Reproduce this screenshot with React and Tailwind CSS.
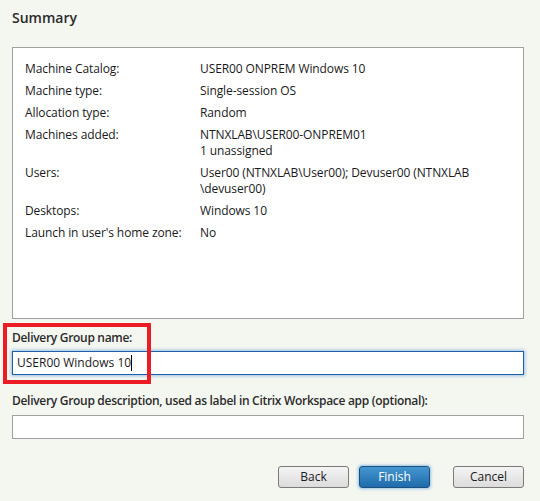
import React from 'react';

const rows = [
  { label: 'Machine Catalog:', value: ['USER00 ONPREM Windows 10'] },
  { label: 'Machine type:', value: ['Single-session OS'] },
  { label: 'Allocation type:', value: ['Random'] },
  { label: 'Machines added:', value: ['NTNXLAB\\USER00-ONPREM01', '1 unassigned'] },
  { label: 'Users:', value: ['User00 (NTNXLAB\\User00); Devuser00 (NTNXLAB', '\\devuser00)'] },
  { label: 'Desktops:', value: ['Windows 10'] },
  { label: "Launch in user's home zone:", value: ['No'] },
];

const font = { fontFamily: '"Open Sans", "Noto Sans", "Liberation Sans", sans-serif' };

const App = () => (
  <div className="relative w-[540px] h-[501px] bg-[#f4f6f0] text-[#1a1a1a] overflow-hidden" style={font}>
    <div className="pl-3 pr-4 pt-[9px]">
      <h2 className="text-[14px] leading-[18px] font-semibold text-[#2b2b2b]">Summary</h2>

      <div className="mt-5 w-[512px] h-[272px] bg-white border border-[#a0a0a0] pt-[13px] pl-3 flex flex-col gap-[6px]">
        {rows.map(r => (
          <div key={r.label} className="flex text-[12px] leading-4 tracking-[-0.1px]">
            <div className="w-[175px] shrink-0">{r.label}</div>
            <div>
              {r.value.map(v => (
                <div key={v}>{v}</div>
              ))}
            </div>
          </div>
        ))}
      </div>

      <div className="mt-[11px] text-[12px] leading-4 font-semibold tracking-[-0.3px] text-[#2b2b2b]">Delivery Group name:</div>
      <div className="mt-[5px] w-[512px] h-6 bg-white border border-[#1f5fa6] shadow-[0_0_3px_1px_rgba(80,150,220,0.55)] flex items-center pl-1 text-[12px]">
        <span>USER00 Windows 10</span>
        <span className="w-px h-4 bg-black"></span>
      </div>

      <div className="mt-[18px] text-[12px] leading-4 font-semibold tracking-[-0.3px] text-[#2b2b2b]">
        Delivery Group description, used as label in Citrix Workspace app (optional):
      </div>
      <div className="mt-[6px] w-[512px] h-6 bg-white border border-[#a0a0a0]"></div>

      <div className="mt-[27px] flex justify-end w-[512px] text-[12px]">
        <button className="w-[71px] h-[22px] rounded-[3px] border border-[#7a7a7a] bg-gradient-to-b from-[#f4f4f4] to-[#dcdcdc] text-[#1a1a1a]">
          Back
        </button>
        <button className="ml-[10px] w-[71px] h-[22px] rounded-[3px] border border-[#1b4f80] bg-gradient-to-b from-[#4597d0] to-[#1f6bab] text-white shadow-[0_0_3px_1px_rgba(90,160,220,0.6)]">
          Finish
        </button>
        <button className="ml-[23px] w-[71px] h-[22px] rounded-[3px] border border-[#7a7a7a] bg-gradient-to-b from-[#f4f4f4] to-[#dcdcdc] text-[#1a1a1a]">
          Cancel
        </button>
      </div>
    </div>

    <div className="absolute left-[3px] top-[323px] w-[148px] h-[61px] border-4 border-[#ec1c24] pointer-events-none"></div>
  </div>
);

export default App;
